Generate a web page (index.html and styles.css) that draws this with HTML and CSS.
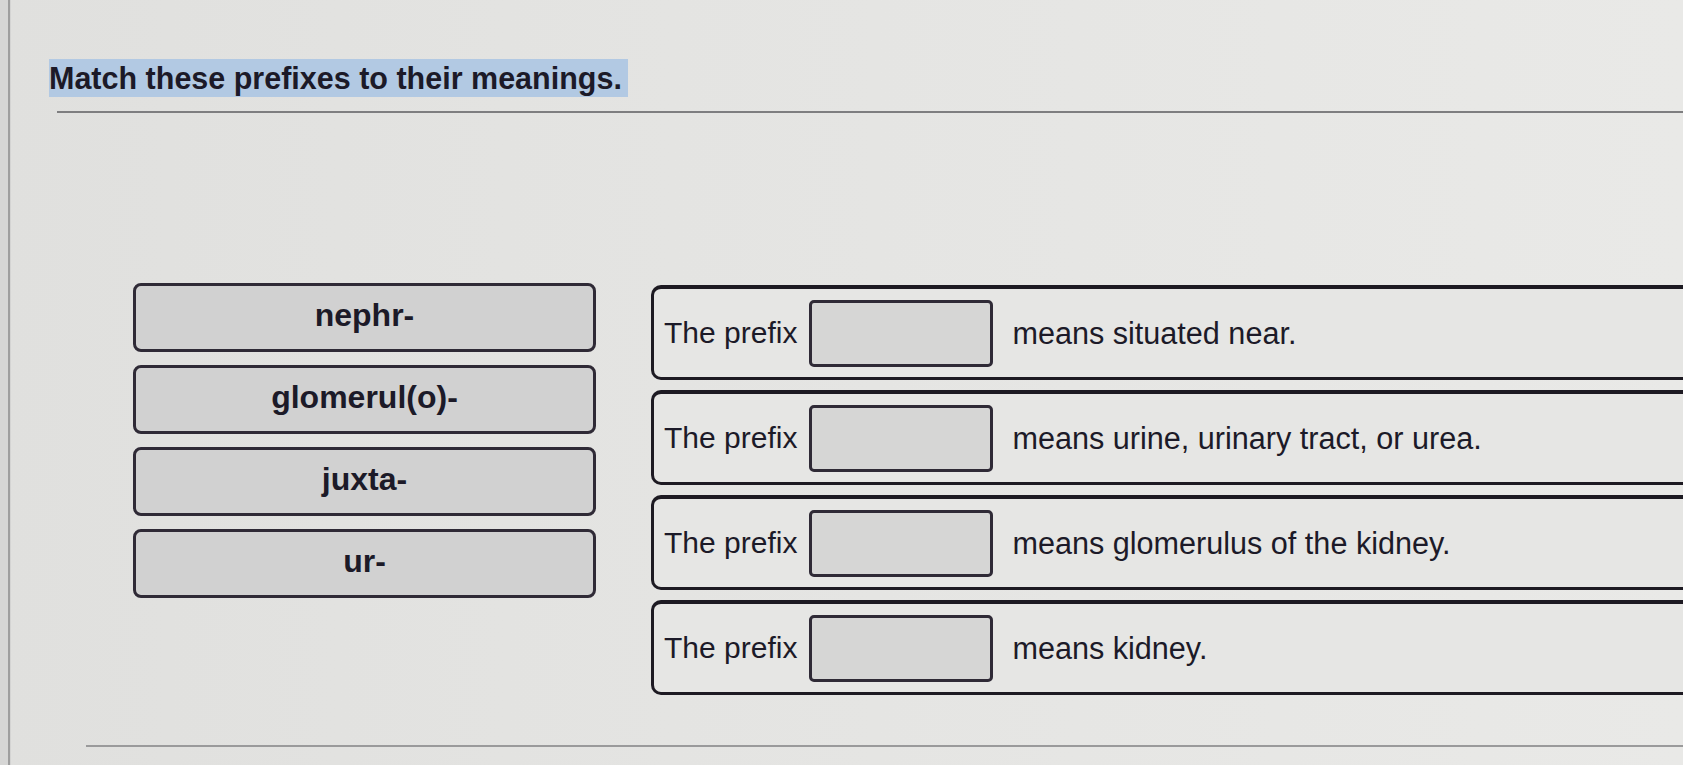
FILE: index.html
```html
<!DOCTYPE html>
<html lang="en">
<head>
<meta charset="utf-8">
<title>Match these prefixes</title>
<link rel="stylesheet" href="styles.css">
</head>
<body>
<div class="screen">
  <div class="edge"></div>
  <div class="page">
    <div class="header">
      <h1 class="title"><span class="sel">Match these prefixes to their meanings.</span></h1>
    </div>
    <div class="rule-top"></div>
    <div class="activity">
      <div class="bank">
        <div class="chip">nephr-</div>
        <div class="chip">glomerul(o)-</div>
        <div class="chip">juxta-</div>
        <div class="chip">ur-</div>
      </div>
      <div class="targets">
        <div class="row"><span class="lead">The prefix</span><span class="drop"></span><span class="meaning">means situated near.</span></div>
        <div class="row"><span class="lead">The prefix</span><span class="drop"></span><span class="meaning">means urine, urinary tract, or urea.</span></div>
        <div class="row"><span class="lead">The prefix</span><span class="drop"></span><span class="meaning">means glomerulus of the kidney.</span></div>
        <div class="row"><span class="lead">The prefix</span><span class="drop"></span><span class="meaning">means kidney.</span></div>
      </div>
    </div>
    <div class="rule-bottom"></div>
  </div>
</div>
</body>
</html>
```

FILE: styles.css
```css
* { box-sizing: border-box; }
html, body { margin: 0; padding: 0; }
body {
  width: 1683px;
  height: 765px;
  overflow: hidden;
  font-family: "Liberation Sans", Arial, sans-serif;
  color: #1c1a28;
  background: linear-gradient(90deg, #e0e0de 0%, #e4e4e2 40%, #e9e9e7 100%);
}
.screen {
  display: flex;
  height: 765px;
}
.edge {
  width: 11px;
  flex: none;
  background: linear-gradient(90deg, #d6d6d5 0 8px, #9e9e9e 8px 10px, #d4d4d3 10px);
}
.page {
  flex: 1;
  display: flex;
  flex-direction: column;
  padding-top: 59px;
  min-width: 0;
}
.header {
  padding-left: 38px;
  overflow: hidden;
}
.title {
  margin: 0;
  font-size: 30.5px;
  font-weight: 700;
  line-height: 38px;
}
.sel {
  display: inline-block;
  background: #b2c9e3;
  padding-right: 6px;
}
.rule-top {
  margin-top: 14px;
  margin-left: 46px;
  height: 2px;
  background: #7e7e80;
}
.activity {
  display: flex;
  align-items: flex-start;
  margin-top: 170px;
  margin-right: -30px;
}
.bank {
  margin-left: 122px;
  width: 463px;
  display: flex;
  flex-direction: column;
  gap: 13px;
  flex: none;
}
.chip {
  height: 69px;
  border: 3px solid #2f2a36;
  border-radius: 8px;
  background: #d1d1d1;
  display: flex;
  align-items: center;
  justify-content: center;
  font-size: 32px;
  font-weight: 700;
  padding-bottom: 4px;
}
.targets {
  margin-left: 55px;
  margin-top: 2px;
  flex: 1;
  display: flex;
  flex-direction: column;
  gap: 10px;
}
.row {
  height: 95px;
  border: 3px solid #1d1a22;
  border-top-width: 4px;
  border-right: none;
  border-radius: 10px 0 0 10px;
  background: #e6e6e4;
  display: flex;
  align-items: center;
  padding-left: 10px;
  font-size: 30px;
}
.lead {
  margin-right: 12px;
}
.drop {
  width: 184px;
  height: 67px;
  border: 3px solid #2f2a36;
  border-radius: 5px;
  background: #d6d6d5;
  flex: none;
}
.meaning {
  margin-left: 19px;
  font-size: 30.6px;
}
.rule-bottom {
  margin-top: 50px;
  margin-left: 75px;
  height: 2px;
  background: #9a9a9b;
}
```
